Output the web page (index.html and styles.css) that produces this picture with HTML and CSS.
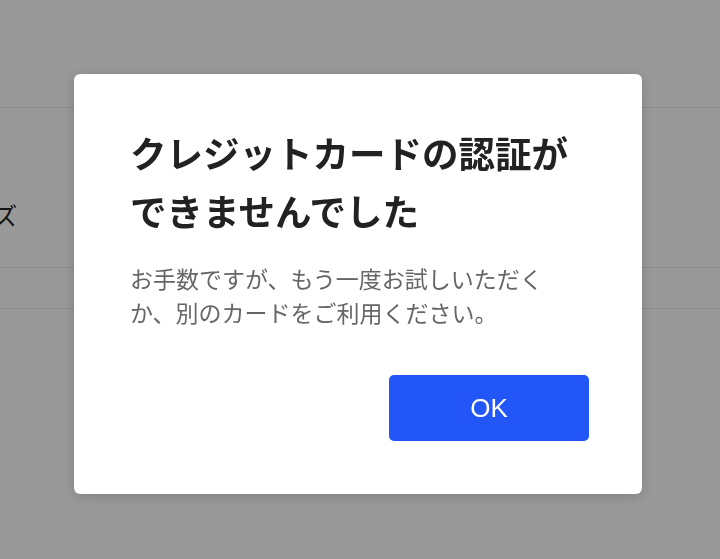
FILE: index.html
```html
<!DOCTYPE html>
<html lang="ja">
<head>
<meta charset="utf-8">
<title>エラー</title>
<link rel="stylesheet" href="styles.css">
</head>
<body>
<div class="page">
  <div class="header"></div>
  <div class="section"><span class="label">サイズ</span></div>
  <div class="row"></div>
  <div class="rest"></div>
</div>
<div class="overlay">
  <div class="dialog" role="alertdialog">
    <h1 class="title">クレジットカードの認証ができませんでした</h1>
    <p class="message">お手数ですが、もう一度お試しいただくか、別のカードをご利用ください。</p>
    <div class="actions">
      <button class="ok">OK</button>
    </div>
  </div>
</div>
</body>
</html>
```
FILE: styles.css
```css
html, body {
  margin: 0;
  padding: 0;
  background: #ffffff;
  font-family: "Noto Sans CJK JP", "Noto Sans", sans-serif;
}
.page {
  overflow: hidden;
  height: 559px;
}
.header {
  height: 107px;
  border-bottom: 1px solid #e9e9e9;
}
.section {
  height: 160px;
  box-sizing: border-box;
  padding-top: 90px;
  border-bottom: 1px solid #e9e9e9;
  color: #222222;
  font-size: 24px;
  line-height: 34px;
  white-space: nowrap;
}
.label {
  display: inline-block;
  margin-left: -54px;
}
.row {
  height: 40px;
  border-bottom: 1px solid #e9e9e9;
}
.overlay {
  position: fixed;
  inset: 0;
  background: rgba(0, 0, 0, 0.4);
  display: flex;
  justify-content: center;
  align-items: flex-start;
  padding: 74px 4px 0 0;
}
.dialog {
  width: 568px;
  box-sizing: border-box;
  background: #ffffff;
  border-radius: 6px;
  box-shadow: 0 2px 14px rgba(0, 0, 0, 0.18);
  padding: 50px 53px 53px 56px;
}
.title {
  margin: 0;
  font-size: 36.5px;
  line-height: 58px;
  font-weight: 700;
  color: #222222;
}
.message {
  max-width: 440px;
  margin: 21px 0 0;
  font-size: 23px;
  line-height: 34px;
  color: #666666;
}
.actions {
  display: flex;
  justify-content: flex-end;
  margin-top: 46px;
}
.ok {
  width: 200px;
  height: 66px;
  border: none;
  border-radius: 5px;
  background: #2356f6;
  color: #ffffff;
  font-family: "Liberation Sans", Arial, sans-serif;
  font-size: 26px;
  padding: 0;
}
```
